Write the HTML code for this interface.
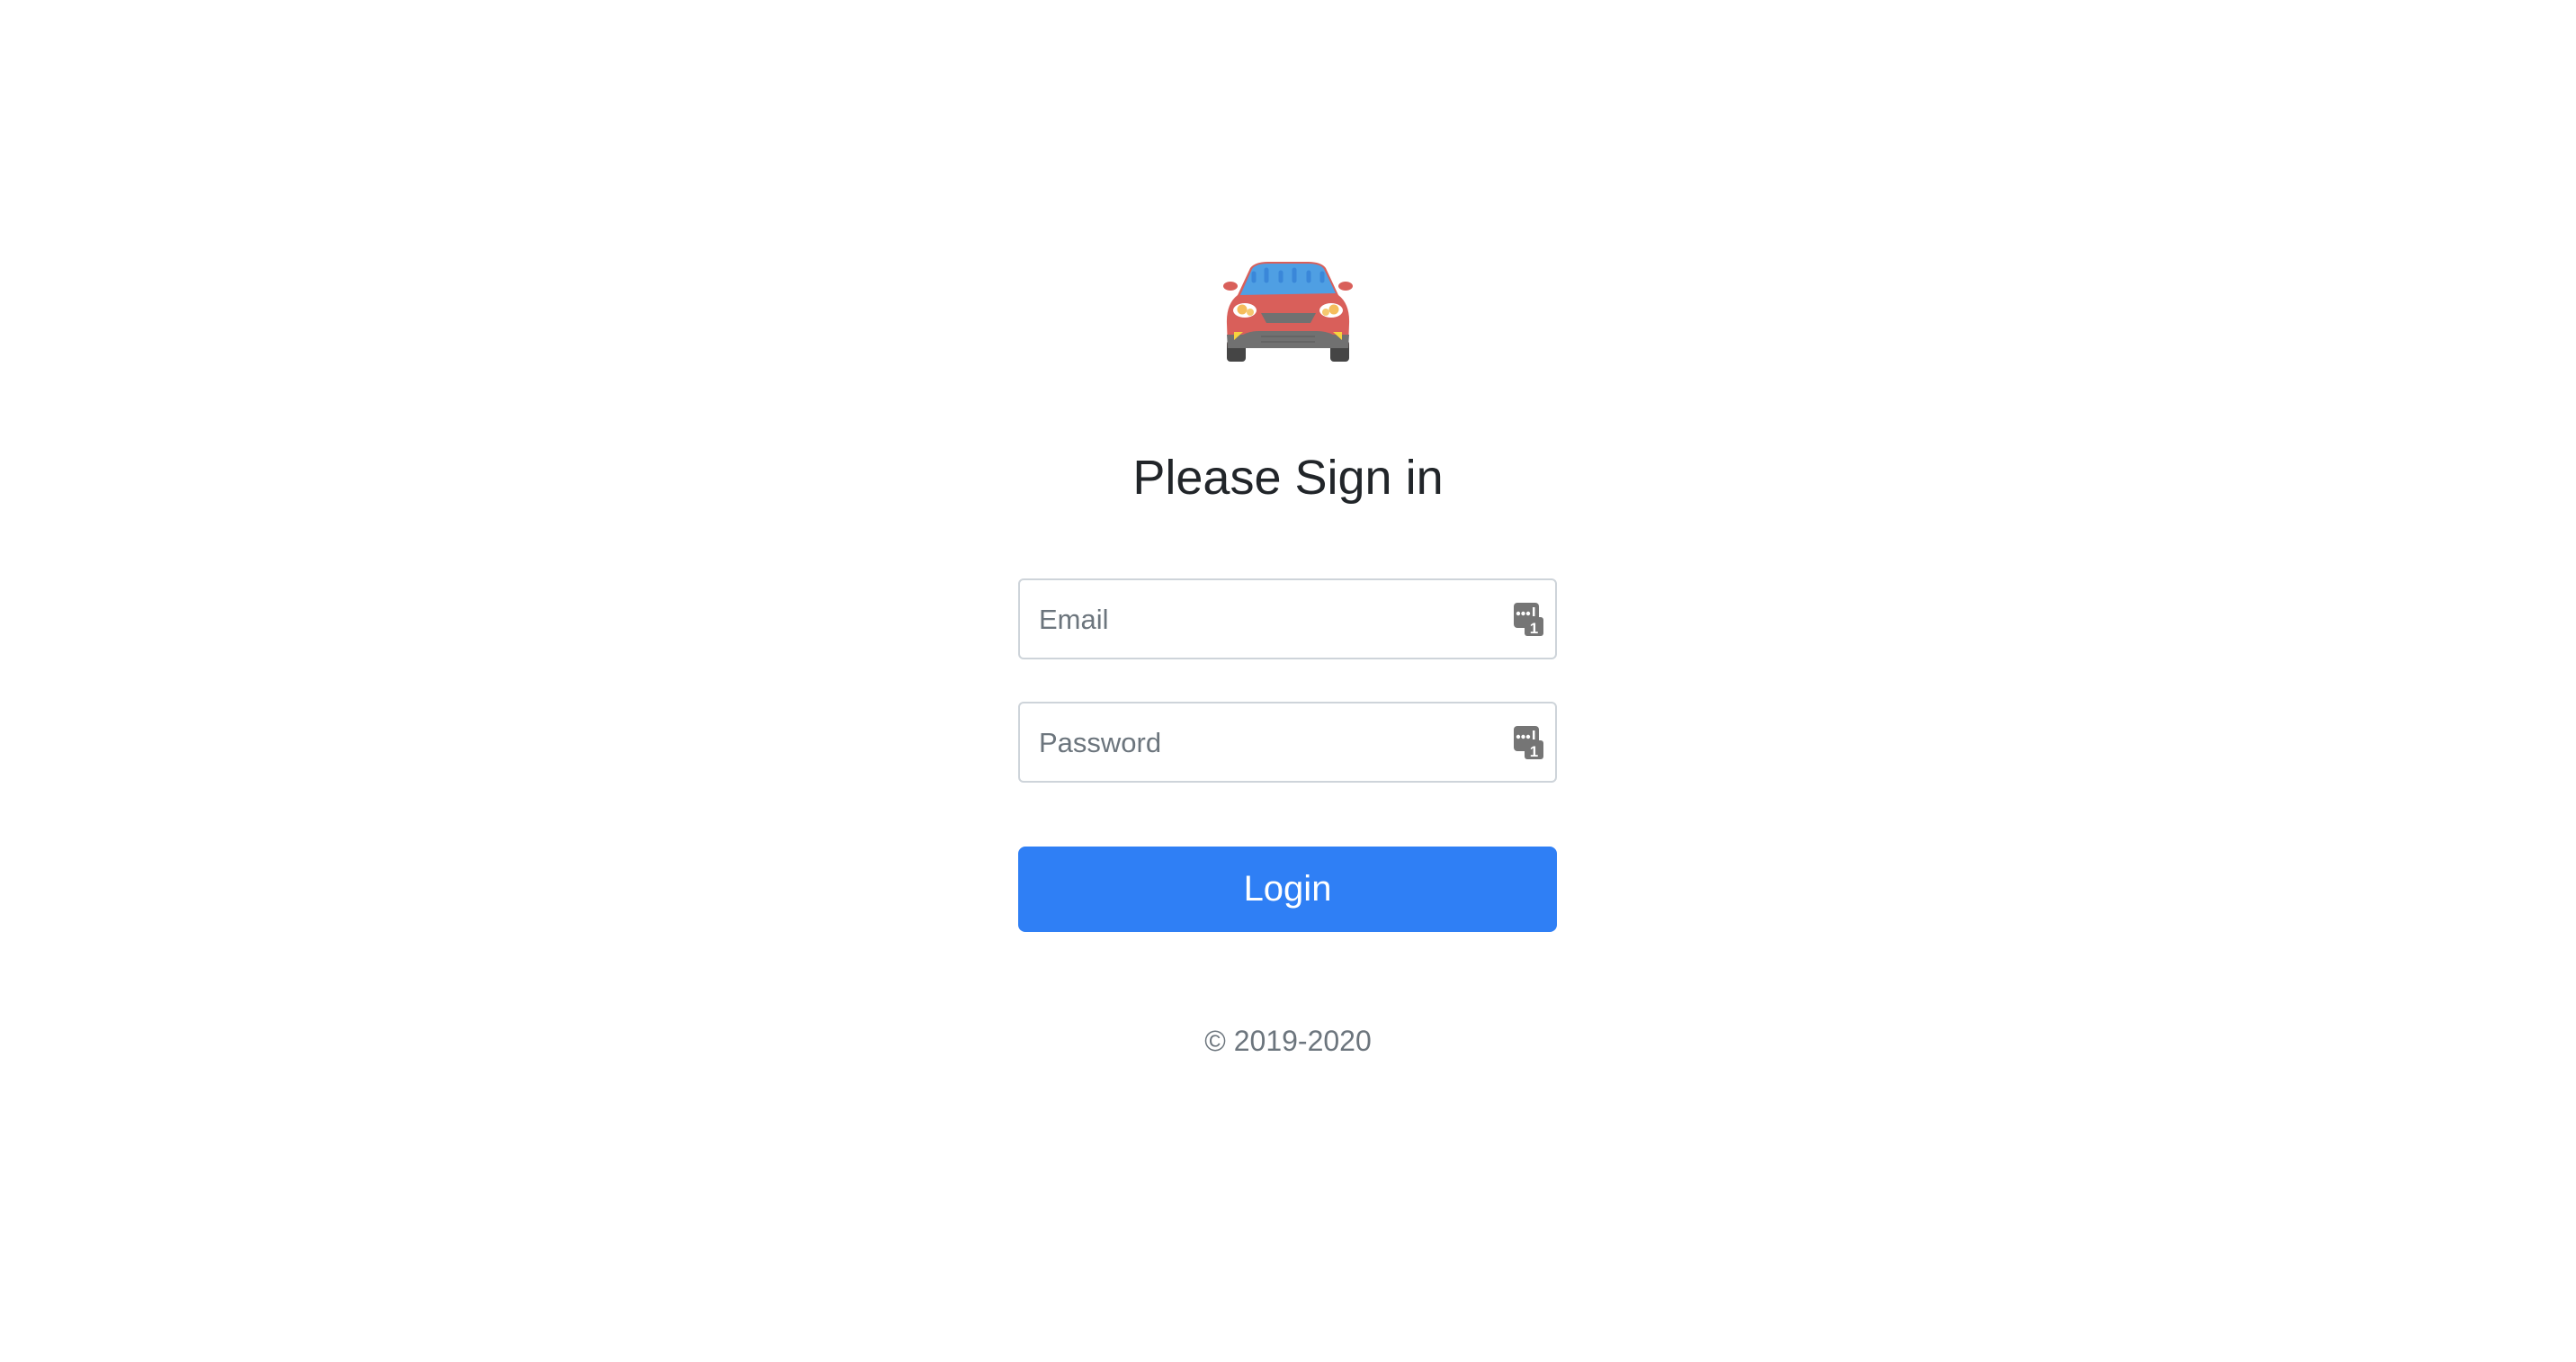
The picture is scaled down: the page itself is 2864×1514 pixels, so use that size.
<!DOCTYPE html>
<html><head><meta charset="utf-8"><style>
html,body{margin:0;padding:0;background:#fff;width:2864px;height:1514px;overflow:hidden;font-family:"Liberation Sans",Arial,sans-serif}
.abs{position:absolute}
h1{position:absolute;left:0;width:2864px;top:493px;margin:0;text-align:center;font-weight:400;font-size:54px;line-height:76px;color:#212529}
.inp{position:absolute;left:1132px;width:595px;height:86px;border:2px solid #ced4da;border-radius:6px;box-sizing:content-box}
.inp span{position:absolute;left:21px;top:1px;line-height:86px;font-size:31px;color:#6c757d}
.ic{position:absolute;right:12px;top:25px}
.btn{position:absolute;left:1132px;top:941px;width:599px;height:95px;background:#2f7ff5;border-radius:8px;color:#fff;text-align:center;line-height:95px;font-size:40px}
.ft{position:absolute;left:0;width:2864px;top:1137px;text-align:center;font-size:32px;color:#6c757d;line-height:40px}
</style></head><body>
<svg class="abs" style="left:1360px;top:290px" width="144" height="113" viewBox="0 0 144 113">
<rect x="4" y="88" width="21" height="24" rx="4" fill="#454545"/>
<rect x="119" y="88" width="21" height="24" rx="4" fill="#454545"/>
<ellipse cx="8" cy="28" rx="8" ry="5" fill="#d95f5a"/>
<ellipse cx="136" cy="28" rx="8" ry="5" fill="#d95f5a"/>
<path d="M30 8 Q35 1 50 1 L94 1 Q109 1 114 8 L128 38 Q141 48 140 70 L139 97 L5 97 L4 70 Q3 48 16 38 Z" fill="#d95f5a"/>
<path d="M32 9 Q36 3 50 3 L94 3 Q108 3 112 9 L125 36 L19 38 Z" fill="#4f9fe3"/>
<g stroke="#3a87d9" stroke-width="5" stroke-linecap="round"><line x1="34" y1="14" x2="34" y2="22"/><line x1="48" y1="10" x2="48" y2="22"/><line x1="64" y1="13" x2="64" y2="22"/><line x1="79" y1="10" x2="79" y2="22"/><line x1="95" y1="13" x2="95" y2="22"/><line x1="110" y1="14" x2="110" y2="22"/></g>
<ellipse cx="24" cy="55" rx="13" ry="8" fill="#fff"/><circle cx="21" cy="54" r="5.5" fill="#f5bd5c"/><circle cx="30" cy="57" r="4" fill="#f5c870"/>
<ellipse cx="120" cy="55" rx="13" ry="8" fill="#fff"/><circle cx="123" cy="54" r="5.5" fill="#f5bd5c"/><circle cx="114" cy="57" r="4" fill="#f5c870"/>
<path d="M42 58 L103 58 L97 69 L48 69 Z" fill="#717171"/>
<path d="M4 82 L22 82 Q30 78 40 78 L104 78 Q114 78 122 82 L140 82 L139 97 L5 97 Z" fill="#717171"/>
<line x1="42" y1="84" x2="102" y2="84" stroke="#656565" stroke-width="2"/><line x1="42" y1="90" x2="102" y2="90" stroke="#656565" stroke-width="2"/>
<path d="M12 79 L22 79 L12 88 Z" fill="#f7d33d"/><path d="M132 79 L122 79 L132 88 Z" fill="#f7d33d"/>
</svg>
<h1>Please Sign in</h1>
<div class="inp" style="top:643px"><span>Email</span>
<svg class="ic" width="34" height="38" viewBox="0 0 34 38"><rect x="0" y="0" width="28" height="28" rx="4" fill="#757575"/><rect x="12" y="16" width="21" height="21" rx="3" fill="#757575"/><circle cx="5" cy="12" r="2.2" fill="#fff"/><circle cx="10.5" cy="12" r="2.2" fill="#fff"/><circle cx="16" cy="12" r="2.2" fill="#fff"/><rect x="21" y="5" width="2.5" height="10" fill="#fff"/><text x="22.5" y="34" font-size="17" font-weight="bold" fill="#fff" text-anchor="middle" font-family="Liberation Sans">1</text></svg></div>
<div class="inp" style="top:780px"><span>Password</span>
<svg class="ic" width="34" height="38" viewBox="0 0 34 38"><rect x="0" y="0" width="28" height="28" rx="4" fill="#757575"/><rect x="12" y="16" width="21" height="21" rx="3" fill="#757575"/><circle cx="5" cy="12" r="2.2" fill="#fff"/><circle cx="10.5" cy="12" r="2.2" fill="#fff"/><circle cx="16" cy="12" r="2.2" fill="#fff"/><rect x="21" y="5" width="2.5" height="10" fill="#fff"/><text x="22.5" y="34" font-size="17" font-weight="bold" fill="#fff" text-anchor="middle" font-family="Liberation Sans">1</text></svg></div>
<div class="btn">Login</div>
<div class="ft">© 2019-2020</div>
</body></html>
